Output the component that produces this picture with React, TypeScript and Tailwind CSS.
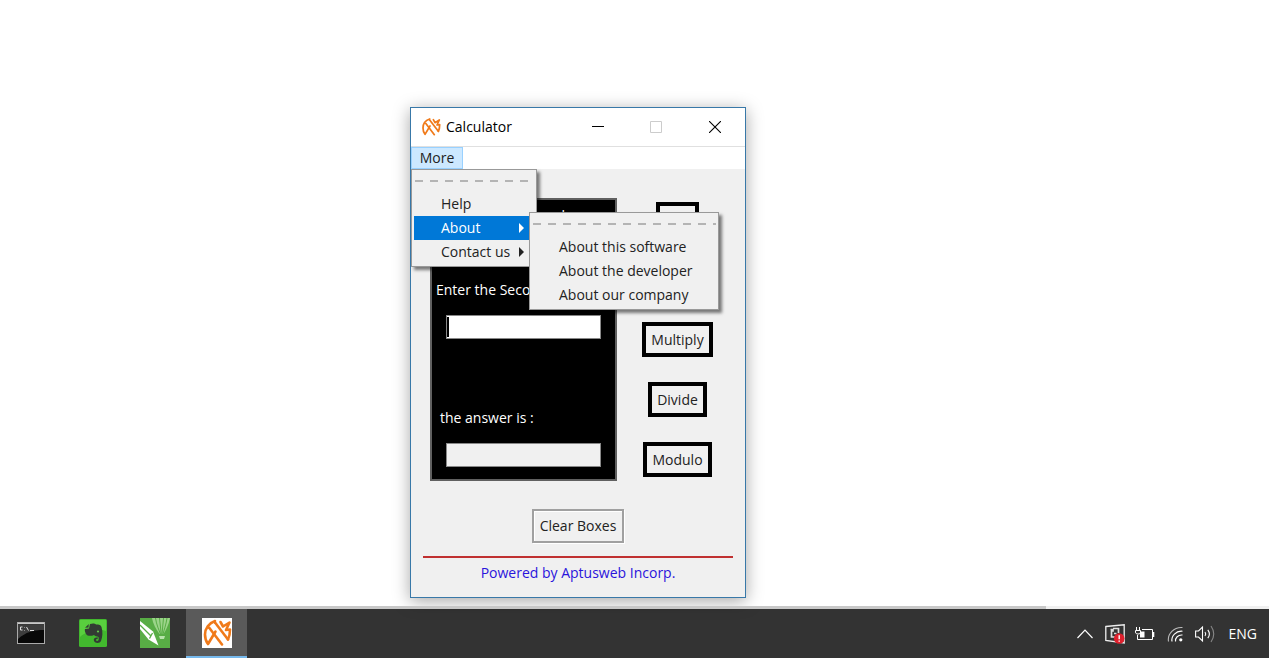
import { ReactNode } from "react";

function AwLogo({ className }: { className: string }) {
  return (
    <svg viewBox="0 0 30 30" className={className} fill="none" stroke="#f07a1a" strokeWidth="2.6" strokeLinejoin="round" strokeLinecap="round" aria-hidden="true">
      <path d="M13 3 C7 5 3 10.5 3 16.5 C3 20.5 4 23.5 6 26 L13.5 13.5" />
      <path d="M7 9.5 L20 26.5" />
      <path d="M13 4.5 L26 21.5" />
      <path d="M18.5 4 L21 8.5 L27.5 4.5 L24 12 L28 11.5 C28 15.5 27.5 18.5 26 21.5" />
    </svg>
  );
}

function Tearoff() {
  return (
    <div className="flex h-5 items-center pb-[3px] pl-px">
      <div className="h-0.5 w-full bg-[repeating-linear-gradient(90deg,#b4b4b4_0px,#b4b4b4_8px,transparent_8px,transparent_15px)]" />
    </div>
  );
}

function MenuItem({ children, active = false, submenu = false }: { children: ReactNode; active?: boolean; submenu?: boolean }) {
  return (
    <button
      type="button"
      role="menuitem"
      className={`flex h-6 w-full items-center justify-between whitespace-nowrap pl-[27px] pr-2.5 text-left ${active ? "bg-[#0078d7] text-white" : "text-[#222]"}`}
    >
      {children}
      {submenu && (
        <svg viewBox="0 0 5 10" className="h-2.5 w-[5px]" fill="currentColor" aria-hidden="true">
          <path d="M0 0 L5 5 L0 10 Z" />
        </svg>
      )}
    </button>
  );
}

function OperatorButton({ children }: { children: ReactNode }) {
  return (
    <button type="button" className="h-[35px] border-4 border-black bg-[#f0f0f0] px-[5px] text-[#222]">
      {children}
    </button>
  );
}

function Menus() {
  return (
    <div role="menu" aria-label="More" className="absolute left-0 top-full z-10 w-[126px] border border-[#999] bg-[#f0f0f0] p-0.5 shadow-[3px_3px_3px_rgba(0,0,0,0.5)]">
      <Tearoff />
      <MenuItem>Help</MenuItem>
      <div className="relative">
        <MenuItem active submenu>About</MenuItem>
        <div role="menu" aria-label="About" className="absolute -top-1 left-[115px] w-[190px] border border-[#999] bg-[#f0f0f0] p-0.5 shadow-[3px_3px_3px_rgba(0,0,0,0.5)]">
          <Tearoff />
          <MenuItem>About this software</MenuItem>
          <MenuItem>About the developer</MenuItem>
          <MenuItem>About our company</MenuItem>
        </div>
      </div>
      <MenuItem submenu>Contact us</MenuItem>
    </div>
  );
}

function CalculatorWindow() {
  return (
    <section aria-label="Calculator" className="absolute left-[410px] top-[107px] flex w-[336px] flex-col border border-[#3878a8] bg-[#f0f0f0] text-sm shadow-[0_3px_16px_rgba(0,0,0,0.35)]">
      <header className="flex h-[39px] items-center border-b border-[#e0e0e0] bg-white pl-2.5 text-black">
        <AwLogo className="size-5" />
        <h1 className="flex-1 pl-[5px]">Calculator</h1>
        <button type="button" aria-label="Minimize" className="flex h-full w-[58px] items-center justify-center">
          <svg viewBox="0 0 12 12" className="size-3" stroke="#000" aria-hidden="true"><path d="M0 5.5 H12" /></svg>
        </button>
        <button type="button" aria-label="Maximize" disabled className="flex h-full w-[58px] items-center justify-center">
          <svg viewBox="0 0 12 12" className="size-3" fill="none" stroke="#ccc" aria-hidden="true"><path d="M.5 .5 H11.5 V11.5 H.5 Z" /></svg>
        </button>
        <button type="button" aria-label="Close" className="flex h-full w-[60px] items-center justify-center">
          <svg viewBox="0 0 12 12" className="size-3" stroke="#000" strokeWidth="1.1" aria-hidden="true"><path d="M0 0 L12 12 M12 0 L0 12" /></svg>
        </button>
      </header>
      <nav className="relative flex h-[22px] bg-white">
        <button type="button" className="w-[52px] border border-[#99d1ff] bg-[#cce8ff] text-[#222]">More</button>
        <Menus />
      </nav>
      <main className="pb-3.5 pt-[29px]">
        <div className="flex pl-[19px] pr-[7px]">
          <form className="flex w-[187px] flex-col border-2 border-[#606060] bg-black pb-3 pt-1.5 text-white">
            <label htmlFor="first" className="h-5 whitespace-nowrap pl-1 leading-5">Enter the First number</label>
            <input id="first" type="text" className="mx-3.5 mt-[13px] h-6 border border-[#888] bg-white px-1 text-black" />
            <label htmlFor="second" className="mt-[17px] h-5 whitespace-nowrap pl-1 leading-5">Enter the Second number</label>
            <div className="relative mx-3.5 mt-[15px] flex">
              <input id="second" type="text" className="h-6 w-full border border-[#888] bg-white px-1 text-black outline-none" />
              <span className="absolute left-px top-0.5 h-5 w-0.5 bg-black" />
            </div>
            <label htmlFor="answer" className="mt-[69px] h-5 pl-2 leading-5">the answer is :</label>
            <input id="answer" type="text" readOnly className="mx-3.5 mt-[15px] h-6 border border-[#888] bg-[#f0f0f0] px-1 text-black" />
          </form>
          <div className="flex flex-1 flex-col items-center gap-[25px] pt-1">
            <OperatorButton>Add</OperatorButton>
            <OperatorButton>Subtract</OperatorButton>
            <OperatorButton>Multiply</OperatorButton>
            <OperatorButton>Divide</OperatorButton>
            <OperatorButton>Modulo</OperatorButton>
          </div>
        </div>
        <div className="mt-7 flex justify-center">
          <button type="button" className="h-[34px] border-2 border-[#a0a0a0] bg-[#f0f0f0] px-1.5 text-[#222] shadow-[1px_1px_0_#fff,inset_1px_1px_0_#fff]">Clear Boxes</button>
        </div>
        <div className="mx-3 mt-[13px] h-0.5 bg-[#c03030]" />
        <p className="mt-[5px] text-center text-[#2a14dc]">Powered by Aptusweb Incorp.</p>
      </main>
    </section>
  );
}

function TaskButton({ label, active = false, children }: { label: string; active?: boolean; children: ReactNode }) {
  return (
    <button type="button" aria-label={label} className={`flex h-full w-[61px] items-center justify-center border-b-2 ${active ? "border-[#76b9ed] bg-[#5a5a5a]" : "border-transparent"}`}>
      {children}
    </button>
  );
}

function Taskbar() {
  return (
    <footer className="flex h-[49px] items-center justify-between bg-[#333]">
      <div className="flex h-full gap-px">
        <TaskButton label="Command prompt">
          <svg viewBox="0 0 28 22" className="h-[22px] w-7" aria-hidden="true">
            <rect x=".5" y=".5" width="27" height="21" fill="#080808" stroke="#aaa" />
            <path d="M1 3 H27 V8 C16 8 9 10 1 17Z" fill="#3d3d3d" />
            <path d="M1 1.5 H27" stroke="#c8c8c8" strokeWidth="1.5" />
            <path d="M5.5 5 H3.5 V8 H5.5 M7.5 5.5 V6 M7.5 8 V8.5 M9.5 5 L11.5 8.5 M13 8.5 H17" stroke="#ddd" fill="none" />
          </svg>
        </TaskButton>
        <TaskButton label="Evernote">
          <svg viewBox="0 0 28 28" className="size-7" aria-hidden="true">
            <rect width="28" height="28" rx="1.5" fill="#42b82e" />
            <path d="M1 1 H27 V12 C18 9 8 12 1 18Z" fill="#59cf3e" />
            <path d="M6 10 L10 9.5 L11 5 C14 4 16 4.5 17 5.5 C20 5.5 22 6 22.5 8 C24 13 23.5 18 22 22 C21 24.5 16 24.5 15 22 C14 19.5 16 18 19 18.5 L18.5 20 C16.5 19.8 16.5 21.8 18 22 C19.8 22 20 20 19.5 18 C18 17.5 16 17 15 16 C12 17.5 8 17 7 15 C6 13 5.5 11 6 10Z" fill="#333b34" />
            <path d="M6 8.8 L9.8 5 L9.5 8.6Z" fill="#333b34" />
            <circle cx="19" cy="12.5" r="1.1" fill="#65c84e" />
          </svg>
        </TaskButton>
        <TaskButton label="Graphics editor">
          <svg viewBox="0 0 30 30" className="size-[30px]" aria-hidden="true">
            <rect width="30" height="30" fill="#58ad45" />
            <path d="M12 0 H30 C29 6 26 12 23.5 16 H19.5 C16 11 13 6 12 0Z" fill="#9bd489" />
            <path d="M15.5 0 C16.5 7 19 12 20.5 16 M19.5 0 L21.2 16 M23.5 0 L22 16 M27 0 C26 7 24 12 23 16" stroke="#58ad45" fill="none" />
            <path d="M19 18 H25 L24 21 H20Z" fill="#b8e2ab" />
            <path d="M0 3 L13 13.5 L18.5 27.5 L8.5 21.5 L0 11Z" fill="#fff" />
            <path d="M0 7 L11 18 M12.5 15 L9.5 20.5" stroke="#58ad45" strokeWidth="1.3" />
          </svg>
        </TaskButton>
        <TaskButton label="Calculator" active>
          <span className="bg-white"><AwLogo className="size-[30px]" /></span>
        </TaskButton>
      </div>
      <div className="flex items-center pr-3 text-white">
        <button type="button" aria-label="Show hidden icons" className="mr-3">
          <svg viewBox="0 0 16 10" className="h-2.5 w-4" fill="none" stroke="#fff" strokeWidth="1.2" aria-hidden="true"><path d="M.5 9 L8 1.2 L15.5 9" /></svg>
        </button>
        <button type="button" aria-label="Alert" className="mr-2.5">
          <svg viewBox="0 0 20 20" className="size-5" fill="none" aria-hidden="true">
            <path d="M.8 2.5 L19.2 .8 V19 L.8 16.5Z" stroke="#eee" strokeWidth="1.3" />
            <path d="M5.5 5.5 H8 V7 H6.5 V13 H12 M9 9.5 H11.5 M8 4.5 H13.5 V9" stroke="#ddd" strokeWidth="1.7" />
            <circle cx="14.2" cy="14.5" r="5.3" fill="#df202d" />
            <path d="M14.2 11.3 V15.3 M14.2 16.5 V17.8" stroke="#fff" strokeWidth="1.4" />
          </svg>
        </button>
        <button type="button" aria-label="Battery charging" className="mr-3">
          <svg viewBox="0 0 20 14" className="h-3.5 w-5" fill="none" stroke="#fff" aria-hidden="true">
            <path d="M7 2.5 H17.5 V12.5 H2.5 V8" />
            <path d="M18.5 5 V10" strokeWidth="1.6" />
            <path d="M1.5 0 V3 M4.5 0 V3 M.5 3.5 H5.5 V5 C5.5 6.5 4.5 7 3 7 C1.5 7 .5 6.5 .5 5Z" />
            <path d="M5 4.5 H9.5 V10.5 H5Z" fill="#fff" stroke="none" />
          </svg>
        </button>
        <button type="button" aria-label="Network" className="mr-3">
          <svg viewBox="0 0 16 16" className="size-4" fill="none" stroke="#fff" strokeWidth="1.1" aria-hidden="true">
            <path d="M1.5 15.5 C.2 8 7 .8 15.5 1.5" stroke="#bbb" />
            <path d="M5 15.5 C4 10 9 4.5 15.5 5.2" />
            <path d="M8.5 15.5 C8 12 11 8.5 15.5 9" />
            <circle cx="13.8" cy="13.8" r="1.6" fill="#fff" stroke="none" />
          </svg>
        </button>
        <button type="button" aria-label="Volume" className="mr-3.5">
          <svg viewBox="0 0 20 18" className="h-[18px] w-5" fill="none" stroke="#fff" strokeWidth="1.1" aria-hidden="true">
            <path d="M.6 6 H3.5 L7.5 2 V16 L3.5 12 H.6Z" />
            <path d="M10 7 Q11.5 9 10 11 M12.8 4.8 Q16 9 12.8 13.2" />
            <path d="M16 1 Q21.5 9 16 17" stroke="#888" />
          </svg>
        </button>
        <button type="button" className="text-sm">ENG</button>
      </div>
    </footer>
  );
}

export default function App() {
  return (
    <div className="flex min-h-screen flex-col bg-white font-['Open_Sans',sans-serif]">
      <div className="relative min-h-[606px] flex-1">
        <CalculatorWindow />
      </div>
      <div className="relative flex h-[3px] bg-[#f0f0f0]">
        <div className="w-[82.4%] bg-[#c8c8c8]" />
      </div>
      <Taskbar />
    </div>
  );
}
